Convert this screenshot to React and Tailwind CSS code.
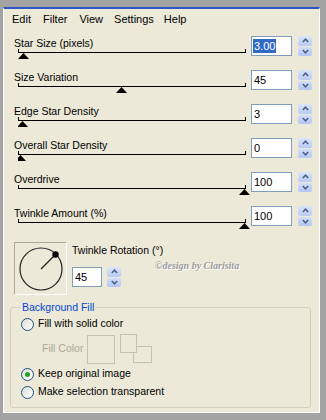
const rows = [
  { label: "Star Size (pixels)", value: "3.00", pos: 23, selected: true },
  { label: "Size Variation", value: "45", pos: 121 },
  { label: "Edge Star Density", value: "3", pos: 22 },
  { label: "Overall Star Density", value: "0", pos: 20 },
  { label: "Overdrive", value: "100", pos: 244 },
  { label: "Twinkle Amount (%)", value: "100", pos: 244 },
];

const Spinner = () => (
  <div className="flex flex-col w-[14px] h-[20px] gap-[1px]">
    <div className="flex-1 rounded-[2px] bg-linear-to-b from-[#dbe5fc] to-[#b9cbf4] flex items-center justify-center">
      <svg width="7" height="5" viewBox="0 0 7 5">
        <path d="M0.8 4 L3.5 1.2 L6.2 4" stroke="#4d6185" strokeWidth="1.6" fill="none" />
      </svg>
    </div>
    <div className="flex-1 rounded-[2px] bg-linear-to-b from-[#d3defb] to-[#b3c6f2] flex items-center justify-center">
      <svg width="7" height="5" viewBox="0 0 7 5">
        <path d="M0.8 1 L3.5 3.8 L6.2 1" stroke="#4d6185" strokeWidth="1.6" fill="none" />
      </svg>
    </div>
  </div>
);

const Field = ({ value, selected, width }) => (
  <div
    className={`h-[20px] ${width} bg-white border border-[#7f9db9] flex items-center pl-[1px] text-[11px] leading-[14px]`}
  >
    {selected ? (
      <span className="bg-[#316ac5] text-white px-[1px]">{value}</span>
    ) : (
      <span className="px-[1px]">{value}</span>
    )}
  </div>
);

const Slider = ({ pos }) => {
  const cx = pos - 18 + 0.5;
  return (
    <svg width="236" height="15" className="block -mt-[3px] ml-[4px]">
      <line x1="0.5" y1="2" x2="0.5" y2="6" stroke="#000" />
      <line x1="227.5" y1="2" x2="227.5" y2="6" stroke="#000" />
      <line x1="0" y1="5.5" x2="228" y2="5.5" stroke="#000" />
      <polygon points={`${cx - 5.5},12 ${cx + 5.5},12 ${cx},6`} fill="#000" />
    </svg>
  );
};

const Radio = ({ checked, label }) => (
  <div className="flex items-center h-[18px] pl-[10px]">
    <div className="w-[13px] h-[13px] rounded-full border border-[#1c5180] bg-linear-to-br from-[#dcdcd7] to-white flex items-center justify-center">
      {checked && <div className="w-[5px] h-[5px] rounded-full bg-[#21a121]" />}
    </div>
    <span className="ml-[4px]">{label}</span>
  </div>
);

export default function App() {
  return (
    <div className="w-[326px] h-[420px] bg-[#a3a3a3] pt-[7px] pl-[3px] pr-[6px] pb-[7px] font-['Liberation_Sans',Arial,sans-serif] text-[10.5px] text-black">
      <div className="h-full bg-[#ece9d8] border-t-2 border-t-[#2a56c6] border-l border-r border-b border-l-white border-r-white border-b-white">
        {/* menu */}
        <div className="flex h-[20px] items-center gap-[12px] pl-[8px] text-[11px]">
          <span>Edit</span>
          <span>Filter</span>
          <span>View</span>
          <span className="-ml-[1px]">Settings</span>
          <span className="-ml-[2px]">Help</span>
        </div>

        {/* slider rows */}
        <div className="pt-[5px]">
          {rows.map((r) => (
            <div key={r.label} className="flex h-[34px] pl-[10px]">
              <div className="w-[237px]">
                <div className="h-[14px] leading-[14px] mt-[2px]">{r.label}</div>
                <Slider pos={r.pos} />
              </div>
              <div className="flex mt-[2px] gap-[6px]">
                <Field value={r.value} selected={r.selected} width="w-[41px]" />
                <Spinner />
              </div>
            </div>
          ))}
        </div>

        {/* twinkle rotation */}
        <div className="relative flex pl-[10px] pt-[4px] h-[62px]">
          <div className="w-[53px] h-[53px] border border-t-[#aca899] border-l-[#aca899] border-r-white border-b-white">
            <svg width="51" height="51" className="block">
              <circle cx="26" cy="26" r="21" stroke="#222" strokeWidth="1.2" fill="none" />
              <line x1="26" y1="26" x2="40.5" y2="11.5" stroke="#222" strokeWidth="1.2" />
              <circle cx="40.5" cy="11.5" r="3.2" fill="#000" />
            </svg>
          </div>
          <div className="ml-[5px] pt-[1px]">
            <div className="h-[14px] leading-[14px]">Twinkle Rotation (°)</div>
            <div className="flex gap-[5px] mt-[10px]">
              <Field value="45" width="w-[30px]" />
              <Spinner />
            </div>
          </div>
          <span className="absolute left-[151px] top-[20px] font-['Liberation_Serif',serif] italic font-bold text-[10px] text-[#9c9c9c] [text-shadow:1px_1px_0_#ffffff]">
            ©design by Clarisita
          </span>
        </div>

        {/* background fill */}
        <fieldset className="ml-[6px] w-[301px] h-[108px] border border-[#d0d0bf] rounded-[3px]">
          <legend className="ml-[9px] px-[2px] text-[#0046d5] leading-[14px]">Background Fill</legend>
          <div className="mt-[1px]">
            <Radio label="Fill with solid color" />
          </div>
          <div className="flex items-center h-[30px] mt-[1px]">
            <span className="ml-[31px] w-[45px] text-[#aca899]">Fill Color</span>
            <div className="w-[28px] h-[29px] border border-[#c5c2b2]" />
            <svg width="32" height="30" className="block ml-[5px]">
              <rect x="13.5" y="12.5" width="18" height="16" fill="#ece9d8" stroke="#c5c2b2" />
              <rect x="0.5" y="0.5" width="16" height="18" fill="#ece9d8" stroke="#c5c2b2" />
            </svg>
          </div>
          <div className="mt-[1px]">
            <Radio checked label="Keep original image" />
            <Radio label="Make selection transparent" />
          </div>
        </fieldset>
      </div>
    </div>
  );
}
